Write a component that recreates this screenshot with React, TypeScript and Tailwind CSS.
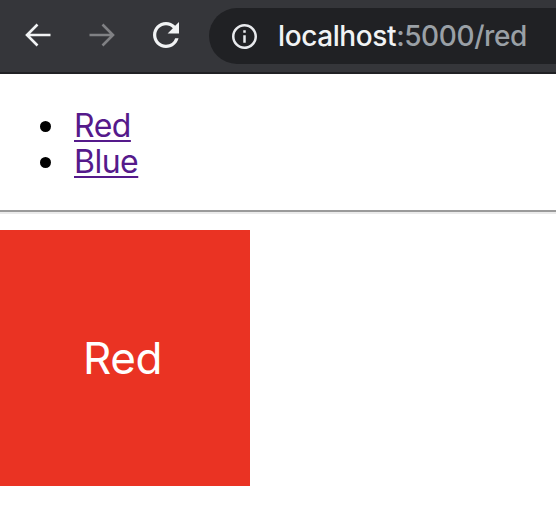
export default function App() {
  return (
    <div className="w-[556px] h-[528px] bg-white overflow-hidden font-['Inter',sans-serif]">
      {/* browser toolbar */}
      <div className="h-[72px] bg-[#35363a] flex items-center pl-[25px]">
        <svg width="26" height="24" viewBox="0 0 26 24" className="mt-[-2px]">
          <path d="M25.5 12H2.5 M12.5 1.5L2 12L12.5 22.5" fill="none" stroke="#f1f3f4" strokeWidth="2.6" />
        </svg>
        <svg width="26" height="24" viewBox="0 0 26 24" className="ml-[38px] mt-[-2px]">
          <path d="M0.5 12H23.5 M13.5 1.5L24 12L13.5 22.5" fill="none" stroke="#808184" strokeWidth="2.6" />
        </svg>
        <svg width="26" height="26" viewBox="4 4 16 16" className="ml-[38px] mt-[-2px]">
          <path
            fill="#f1f3f4"
            d="M17.65 6.35A7.958 7.958 0 0 0 12 4c-4.42 0-7.99 3.58-7.99 8s3.57 8 7.99 8c3.730 0 6.84-2.55 7.73-6h-2.08A5.99 5.99 0 0 1 12 18c-3.31 0-6-2.690-6-6s2.69-6 6-6c1.66 0 3.14.69 4.22 1.78L13 11h7V4l-2.35 2.35z"
          />
        </svg>
        <div className="ml-[30px] flex-1 h-[56px] rounded-l-full bg-[#202124] flex items-center pl-[23px]">
          <svg width="25" height="25" viewBox="2 2 20 20">
            <path
              fill="#e8eaed"
              d="M11 7h2v2h-2zm0 4h2v6h-2zm1-9C6.48 2 2 6.48 2 12s4.48 10 10 10 10-4.48 10-10S17.52 2 12 2zm0 18c-4.41 0-8-3.59-8-8s3.59-8 8-8 8 3.59 8 8-3.59 8-8 8z"
            />
          </svg>
          <span className="ml-[21px] text-[28px] leading-none tracking-[-0.4px] whitespace-nowrap font-medium">
            <span className="text-[#f1f3f4]">localhost</span>
            <span className="text-[#9aa0a6]">:5000/red</span>
          </span>
        </div>
      </div>
      <div className="h-[2px] bg-[#202124]" />

      {/* page */}
      <ul className="mt-[34px] text-[32px] leading-[36px] tracking-[-0.5px]">
        <li className="flex items-center">
          <span className="ml-[40px] w-[11px] h-[11px] rounded-full bg-black" />
          <a href="#" className="ml-[23px] text-[#551a8b] underline underline-offset-[3px] decoration-2">Red</a>
        </li>
        <li className="flex items-center">
          <span className="ml-[40px] w-[11px] h-[11px] rounded-full bg-black" />
          <a href="#" className="ml-[23px] text-[#551a8b] underline underline-offset-[3px] decoration-2">Blue</a>
        </li>
      </ul>
      <div className="mt-[30px] h-[2px] bg-[#9a9a9a]" />
      <div className="h-[2px] bg-[#ebebeb]" />
      <div className="mt-[16px] w-[250px] h-[256px] bg-[#ea3323] flex items-center justify-center text-white text-[44px] tracking-[-0.5px]">
        <span className="mr-[5px]">Red</span>
      </div>
    </div>
  );
}
